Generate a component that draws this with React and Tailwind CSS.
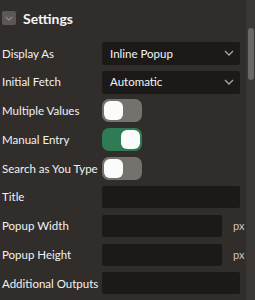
const font = { fontFamily: 'Lato, "Open Sans", sans-serif' }

const Chevron = ({ className }) => (
  <svg className={className} viewBox="0 0 10 6" fill="none" stroke="currentColor" strokeWidth={1.3}>
    <path d="M1 1l4 4 4-4" />
  </svg>
)

const Select = ({ value }) => (
  <div className="flex items-center justify-between h-[23px] w-[138px] bg-[#1c1a19] rounded-[2px] pl-[8px] pr-[6px]">
    <span className="text-[11.5px] text-[#f4f4f4] leading-none">{value}</span>
    <Chevron className="w-[10px] h-[6px] text-[#a9a6a3]" />
  </div>
)

const Toggle = ({ on }) => (
  <div
    className={`flex items-center w-[40px] h-[23px] rounded-[7px] px-[2px] ${
      on ? 'bg-[#2e7b55] justify-end' : 'bg-[#75716d] justify-start'
    }`}
  >
    <div className="w-[19px] h-[19px] rounded-[6px] bg-[#fbfbfb]"></div>
  </div>
)

const Input = ({ width = 'w-[138px]', unit }) => (
  <div className="flex items-center gap-[11px]">
    <div className={`h-[22px] ${width} bg-[#1c1a19] rounded-[2px]`}></div>
    {unit && <span className="text-[11px] text-[#c9c6c3] leading-none">{unit}</span>}
  </div>
)

const rows = [
  { label: 'Display As', control: <Select value="Inline Popup" /> },
  { label: 'Initial Fetch', control: <Select value="Automatic" /> },
  { label: 'Multiple Values', control: <Toggle /> },
  { label: 'Manual Entry', control: <Toggle on /> },
  { label: 'Search as You Type', control: <Toggle /> },
  { label: 'Title', control: <Input /> },
  { label: 'Popup Width', control: <Input width="w-[120px]" unit="px" /> },
  { label: 'Popup Height', control: <Input width="w-[120px]" unit="px" /> },
  { label: 'Additional Outputs', control: <Input /> },
]

export default function App() {
  return (
    <div className="flex w-[255px] h-[300px] bg-[#312d2a] overflow-hidden" style={font}>
      <div className="flex-1 flex flex-col">
        <div className="flex items-center h-[39px] pl-[2px] pb-[3px] gap-[7px]">
          <div className="flex items-center justify-center w-[14px] h-[14px] bg-[#5c5855] rounded-[2px]">
            <Chevron className="w-[8px] h-[5px] text-[#9a9693]" />
          </div>
          <span className="text-[14px] font-bold text-[#f5f5f5]">Settings</span>
        </div>
        {rows.map((row) => (
          <div key={row.label} className="flex items-center h-[28.75px] pl-[2px]">
            <span className="w-[100px] text-[11.5px] text-[#f2f2f2] leading-none whitespace-nowrap">{row.label}</span>
            {row.control}
          </div>
        ))}
      </div>
      <div className="w-[9px] bg-[#3a3633] flex justify-center">
        <div className="w-[6px] h-[52px] mt-[28px] rounded-[3px] bg-[#6b6764]"></div>
      </div>
    </div>
  )
}
